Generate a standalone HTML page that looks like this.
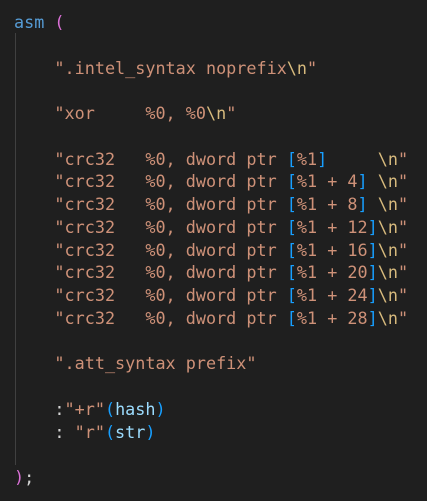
<!DOCTYPE html>
<html><head><style>
html,body{margin:0;padding:0;background:#1f1f1f;width:427px;height:501px;overflow:hidden}
pre{margin:0;position:absolute;left:14px;top:11px;font-family:"DejaVu Sans Mono","Liberation Mono",monospace;font-size:16.8px;line-height:22.75px;color:#d4d4d4}
.g{position:absolute;left:15px;top:33px;width:1px;height:432px;background:#404040}
.k{color:#569cd6}.p{color:#da70d6}.s{color:#ce9178}.e{color:#d7ba7d}.b{color:#179fff}.v{color:#9cdcfe}
</style></head><body>
<div class="g"></div>
<pre><span class="k">asm</span> <span class="p">(</span>

    <span class="s">".intel_syntax noprefix<span class="e">\n</span>"</span>

    <span class="s">"xor     %0, %0<span class="e">\n</span>"</span>

    <span class="s">"crc32   %0, dword ptr <span class="b">[</span>%1<span class="b">]</span>     <span class="e">\n</span>"</span>
    <span class="s">"crc32   %0, dword ptr <span class="b">[</span>%1 + 4<span class="b">]</span> <span class="e">\n</span>"</span>
    <span class="s">"crc32   %0, dword ptr <span class="b">[</span>%1 + 8<span class="b">]</span> <span class="e">\n</span>"</span>
    <span class="s">"crc32   %0, dword ptr <span class="b">[</span>%1 + 12<span class="b">]</span><span class="e">\n</span>"</span>
    <span class="s">"crc32   %0, dword ptr <span class="b">[</span>%1 + 16<span class="b">]</span><span class="e">\n</span>"</span>
    <span class="s">"crc32   %0, dword ptr <span class="b">[</span>%1 + 20<span class="b">]</span><span class="e">\n</span>"</span>
    <span class="s">"crc32   %0, dword ptr <span class="b">[</span>%1 + 24<span class="b">]</span><span class="e">\n</span>"</span>
    <span class="s">"crc32   %0, dword ptr <span class="b">[</span>%1 + 28<span class="b">]</span><span class="e">\n</span>"</span>

    <span class="s">".att_syntax prefix"</span>

    :<span class="s">"+r"</span><span class="b">(</span><span class="v">hash</span><span class="b">)</span>
    : <span class="s">"r"</span><span class="b">(</span><span class="v">str</span><span class="b">)</span>

<span class="p">)</span>;</pre>
</body></html>
